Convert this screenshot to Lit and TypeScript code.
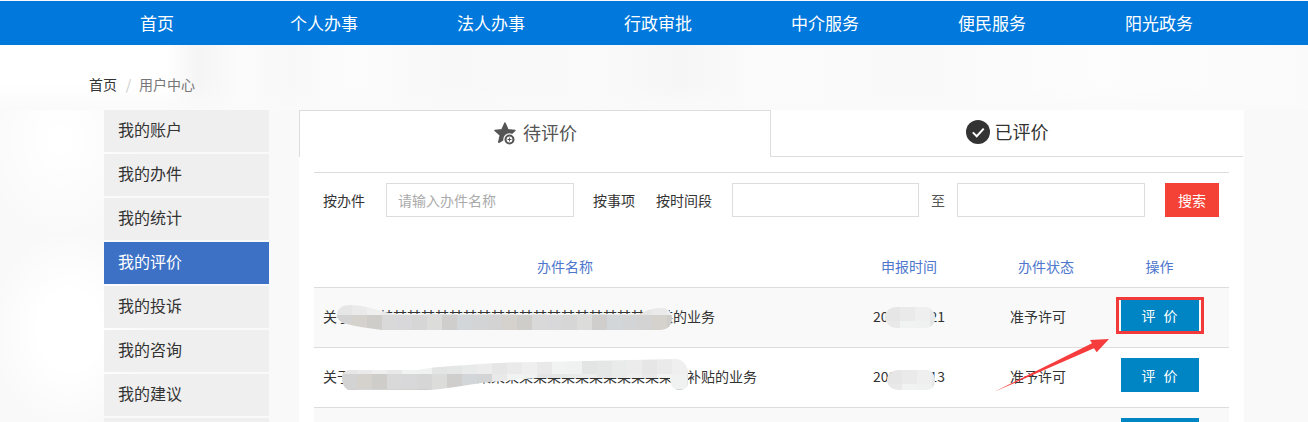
import { LitElement, html, css, svg } from "lit";
import { customElement } from "lit/decorators.js";

const NAV = ["首页", "个人办事", "法人办事", "行政审批", "中介服务", "便民服务", "阳光政务"];
const SIDE = ["我的账户", "我的办件", "我的统计", "我的评价", "我的投诉", "我的咨询", "我的建议", ""];
const ROWS = [
  { name: "关于" + "某".repeat(23) + "的业务", date: "2000-00-21", status: "准予许可", act: "评价" },
  { name: "关于" + "某".repeat(24) + "补贴的业务", date: "2000-00-13", status: "准予许可", act: "评价" },
  { name: "", date: "", status: "", act: "" },
];

// Mosaic tiles that mimic the pixelated redaction smears in the reference.
const GREYS = ["#d9d9d9", "#d3d3d3", "#d0cecd", "#d8d8da", "#d5d2ce", "#d3d6d9", "#d6d6d6", "#cfcdca", "#d2d4d6", "#dcdcda"];
const LIGHT = ["#e6e6e6", "#e9e9e9", "#e3e4e4", "#ececec", "#eeefee", "#f0f1f1", "#e9eaea", "#eaeaea", "#f1f2f2", "#e5e6e6"];

function mosaic(id: string, shape: string, x0: number, x1: number, y0: number, y1: number, split: (x: number) => number) {
  const tiles = [];
  for (let x = x0, i = 0; x < x1; x += 15, i++) {
    for (let y = y0, j = 0; y < y1; y += 15, j++) {
      const s = split(x);
      const fill = y + 7 >= s ? GREYS[(i * 3 + j) % 10] : LIGHT[(i * 7 + j) % 10];
      tiles.push(svg`<rect x=${x} y=${y} width="15.5" height="15.5" fill=${fill}></rect>`);
    }
  }
  return svg`<clipPath id=${id}><path d=${shape}></path></clipPath><g clip-path="url(#${id})">${tiles}</g>`;
}

@customElement("app-root")
export class AppRoot extends LitElement {
  static styles = css`
    :host {
      display: block;
      position: relative;
      width: 1308px;
      height: 422px;
      overflow: hidden;
      font-family: "Noto Sans CJK SC", "Liberation Sans", sans-serif;
      font-size: 14px;
      color: #333;
      background:
        radial-gradient(80px 100px at 70px 330px, #fff 40%, rgba(255, 255, 255, 0) 100%),
        radial-gradient(80px 100px at 60px 140px, #fff 10%, rgba(255, 255, 255, 0) 100%),
        #f9f9f9;
      padding-top: 1px;
      box-sizing: border-box;
    }
    .nav {
      height: 44px;
      background: #0078dc;
      display: flex;
      justify-content: center;
      padding-left: 8px;
    }
    .nav a {
      width: 167px;
      text-align: center;
      line-height: 43px;
      font-size: 17px;
      color: #fff;
    }
    .crumb {
      height: 65px;
      box-sizing: border-box;
      padding: 29px 0 0 89px;
      line-height: 20px;
      display: flex;
      color: #777;
      background:
        linear-gradient(180deg, rgba(250, 250, 250, 0) 60%, #fafafa 100%),
        linear-gradient(90deg, #fff 0, #fff 165px, #f5f5f5 198px, #fbfbfb 240px, #f8f8f8 290px, #fcfcfc 350px, #f8f8f8 450px, #fafafa 600px, #f6f6f6 680px, #fbfbfb 760px, #f9f9f9 920px, #fdfdfd 1100px, #fafafa 1308px);
    }
    .crumb .home { color: #333; }
    .crumb .sep { color: #ccc; width: 45px; margin: 0 -12px 0 -11px; text-align: center; }
    .body {
      display: flex;
      padding-left: 104px;
      gap: 30px;
      align-items: flex-start;
    }
    .side {
      width: 165px;
      display: flex;
      flex-direction: column;
      gap: 2px;
      flex: none;
    }
    .side div {
      height: 42px;
      line-height: 39px;
      padding-left: 14px;
      font-size: 16px;
      background: #efefef;
      color: #333;
    }
    .side div.on { background: #3c71c6; color: #fff; }
    .main {
      width: 945px;
      background: #fff;
      height: 400px;
      flex: none;
    }
    .tabs { display: flex; height: 47px; }
    .tab {
      width: 472px;
      box-sizing: border-box;
      display: flex;
      align-items: center;
      justify-content: center;
      gap: 6px;
      font-size: 18px;
      color: #555;
      padding-bottom: 3px;
    }
    .tab span { margin-bottom: 2px; }
    .tab.on {
      border: 1px solid #ddd;
      border-bottom: none;
    }
    .tab.off {
      border-bottom: 1px solid #ddd;
      color: #333;
      gap: 5px;
    }
    .tab svg { display: block; flex: none; }
    .content { margin: 15px 15px 0; }
    .filter {
      border-top: 1px solid #ddd;
      padding: 10px 10px 0 9px;
      display: flex;
      align-items: center;
      height: 34px;
    }
    .filter span { white-space: nowrap; }
    .filter .l1 { width: 63px; }
    .filter .l2 { margin-left: 19px; width: 63px; }
    .filter .l3 { width: 76px; }
    .filter .l4 { width: 38px; text-align: center; color: #555; }
    .filter input {
      box-sizing: border-box;
      height: 34px;
      border: 1px solid #ddd;
      background: #fff;
      outline: none;
      padding: 0 11px;
      font: inherit;
      color: #333;
      margin: 0;
    }
    .filter input::placeholder { color: #aaa; opacity: 1; }
    .filter .w1 { width: 188px; }
    .filter .w2 { width: 187px; }
    .filter .w3 { width: 188px; }
    .search {
      margin-left: 20px;
      width: 54px;
      height: 34px;
      border: none;
      background: #f44336;
      color: #fff;
      font: inherit;
      padding: 0;
    }
    .grid {
      display: grid;
      grid-template-columns: 502px 186px 88px 139px;
      align-items: center;
      text-align: center;
    }
    .head {
      margin-top: 28px;
      height: 43px;
      color: #4d76cc;
      border-bottom: 1px solid #ddd;
      box-sizing: border-box;
    }
    .row {
      height: 60px;
      box-sizing: border-box;
      border-bottom: 1px solid #ddd;
      padding-bottom: 3px;
    }
    .row.alt { background: #f9f9f9; }
    .row .name { text-align: left; padding-left: 9px; white-space: nowrap; }
    .row .status { padding-right: 16px; }
    .act {
      width: 78px;
      height: 34px;
      border: none;
      padding: 0 0 0 8px;
      margin: -2px auto 0;
      display: block;
      background: #0085c4;
      color: #fff;
      font: inherit;
      letter-spacing: 8px;
    }
    .marks { position: absolute; left: 0; top: 0; pointer-events: none; }
  `;

  render() {
    return html`
      <nav class="nav">${NAV.map((n) => html`<a>${n}</a>`)}</nav>
      <div class="crumb"><span class="home">首页</span><span class="sep">/</span><span>用户中心</span></div>
      <div class="body">
        <aside class="side">
          ${SIDE.map((s, i) => html`<div class=${i === 3 ? "on" : ""}>${s}</div>`)}
        </aside>
        <section class="main">
          <div class="tabs">
            <div class="tab on">
              <svg width="24" height="24" viewBox="0 0 24 24">
                <path fill="#555" stroke="#555" stroke-width="1.6" stroke-linejoin="round"
                  d="M12 2.2l2.9 6.6 7 .7-5.3 4.7 1.6 7-6.2-3.7-6.2 3.7 1.6-7L2 9.5l7-.7z"></path>
                <circle cx="16.5" cy="18.5" r="6.2" fill="#fff"></circle>
                <circle cx="16.5" cy="18.5" r="5" fill="#555"></circle>
                <circle cx="16.5" cy="18.5" r="2.9" fill="#fff"></circle>
                <path stroke="#555" stroke-width="1" d="M16.5 16.6v3.8M14.6 18.5h3.8"></path>
              </svg>
              <span>待评价</span>
            </div>
            <div class="tab off">
              <svg width="24" height="24" viewBox="0 0 24 24">
                <circle cx="12" cy="12" r="12" fill="#333"></circle>
                <path fill="none" stroke="#fff" stroke-width="2" d="M6.8 12.4l3.9 3.8 7-7.6"></path>
              </svg>
              <span>已评价</span>
            </div>
          </div>
          <div class="content">
            <div class="filter">
              <span class="l1">按办件</span>
              <input class="w1" placeholder="请输入办件名称" />
              <span class="l2">按事项</span>
              <span class="l3">按时间段</span>
              <input class="w2" />
              <span class="l4">至</span>
              <input class="w3" />
              <button class="search">搜索</button>
            </div>
            <div class="grid head">
              <span>办件名称</span><span>申报时间</span><span>办件状态</span><span>操作</span>
            </div>
            ${ROWS.map(
              (r, i) => html`
                <div class="grid row ${i % 2 === 0 ? "alt" : ""}">
                  <span class="name">${r.name}</span>
                  <span>${r.date}</span>
                  <span class="status">${r.status}</span>
                  <button class="act">${r.act}</button>
                </div>
              `
            )}
          </div>
        </section>
      </div>
      <svg class="marks" width="1308" height="422" viewBox="0 0 1308 422">
        ${mosaic(
          "b1",
          "M337 315C337 308 343 305 350 305C362 305 378 310 393 314L640 314C648 309 655 308 663 308C669 309 672 313 672 318C672 325 668 330 660 330L382 330C368 328 352 326 343 323C339 321 337 318 337 315Z",
          337, 675, 300, 332, () => 315
        )}
        ${mosaic(
          "b2",
          "M342 378C342 373 345 370 350 370L417 370C435 367 450 366 467 365C490 363 515 362 540 362L677 359C684 360 688 367 688 373L688 383C688 388 684 390 679 390C673 390 670 385 670 378L537 378L480 383C462 386 445 389 427 390L350 390C345 390 342 384 342 378Z",
          342, 690, 359, 391, (x) => (x < 480 ? 374 : 385)
        )}
        ${mosaic(
          "b3",
          "M885 317C885 311 890 307 897 307L925 307C931 307 935 312 935 318C935 324 931 328 925 328L897 328C890 328 885 323 885 317Z",
          885, 936, 306, 329, () => 400
        )}
        ${mosaic(
          "b4",
          "M887 380C887 374 892 370 899 370L926 370C932 370 935 375 935 380C935 386 932 390 926 390L899 390C892 390 887 386 887 380Z",
          887, 936, 369, 391, () => 400
        )}
        <rect x="1117.5" y="298.5" width="85" height="34" fill="none" stroke="#f23a3a" stroke-width="3"></rect>
        <path fill="#f63c3c" d="M994.3 391.7L1092 343.3L1090 340L1109 339L1096.7 352.3L1094 348.3Z"></path>
      </svg>
    `;
  }
}
